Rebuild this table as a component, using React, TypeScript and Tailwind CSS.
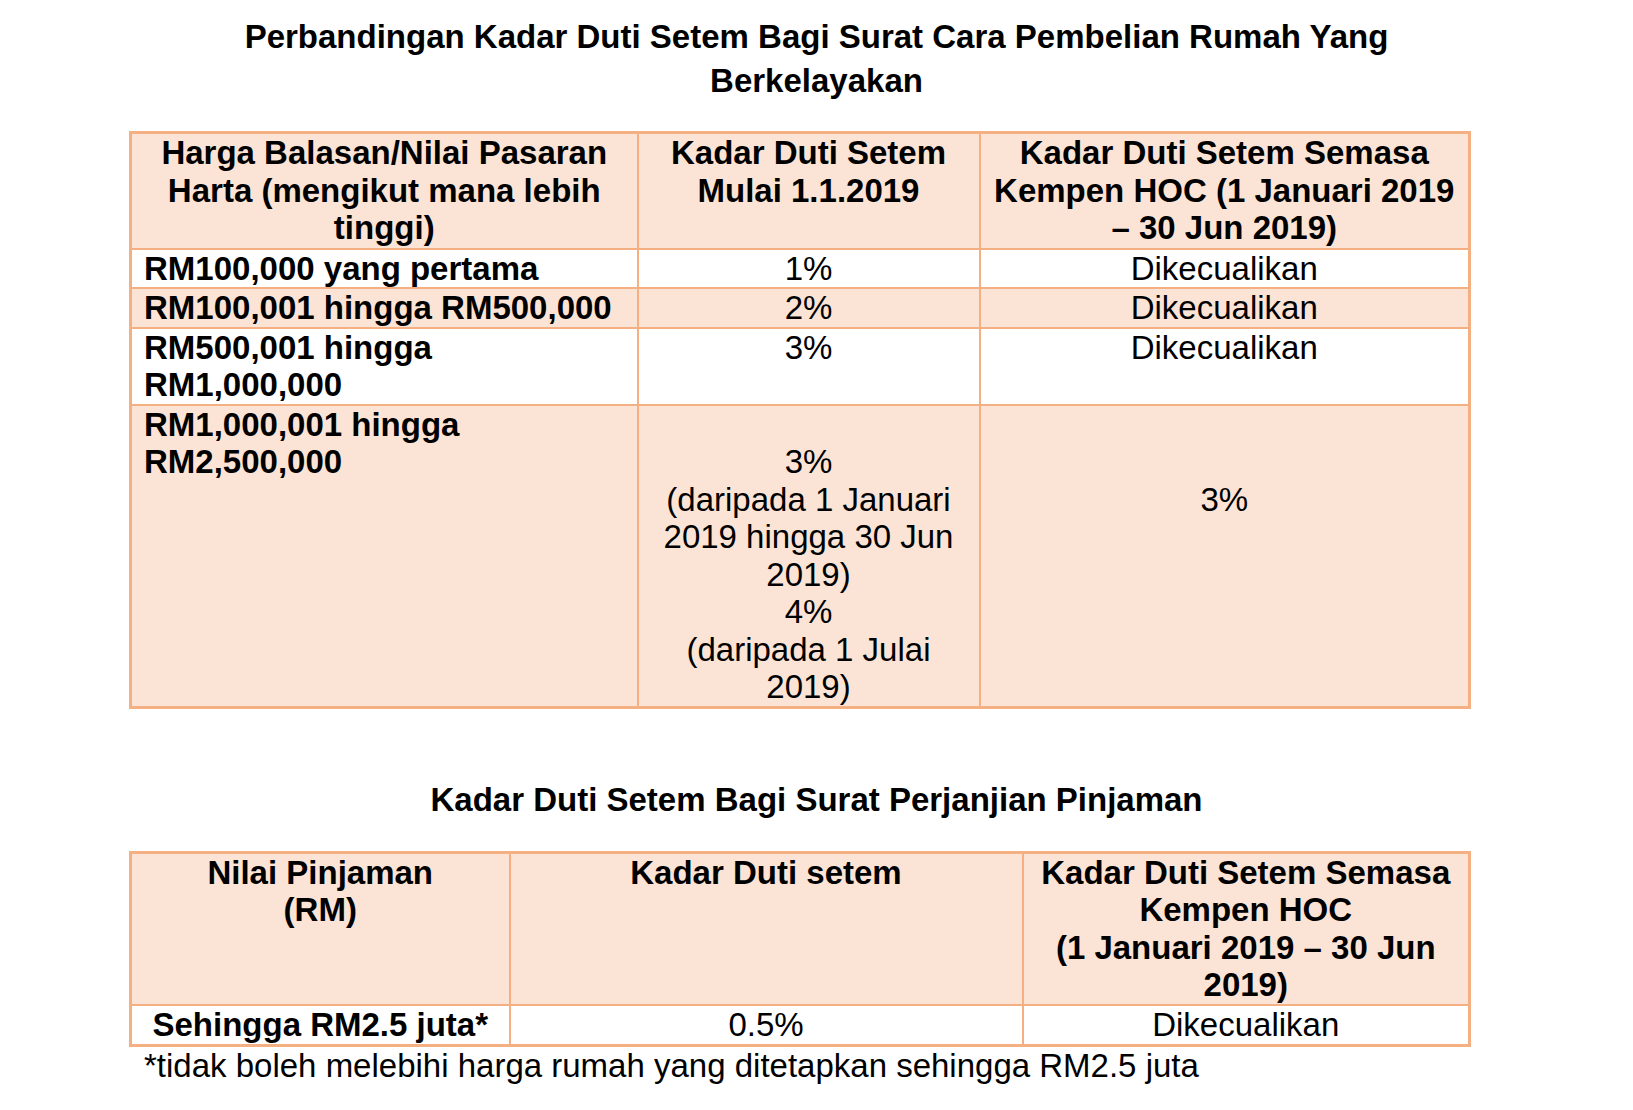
const cellBase = "border-2 border-[#F4B083] align-top p-0";

function TitleBlock({ children }: { children: React.ReactNode }) {
  return (
    <h2 className="text-center font-bold text-[33px] leading-[44px] text-black">
      {children}
    </h2>
  );
}

export default function App() {
  return (
    <div
      className="w-[1633px] h-[1110px] bg-white text-black overflow-hidden"
      style={{ fontFamily: '"Liberation Sans", Arial, sans-serif' }}
    >
      <div className="pt-[15px]">
        <TitleBlock>
          Perbandingan Kadar Duti Setem Bagi Surat Cara Pembelian Rumah Yang
          <br />
          Berkelayakan
        </TitleBlock>
      </div>

      {/* Table 1: house purchase */}
      <div className="pl-[129px] mt-[28px]">
        <table className="w-[1339px] border-collapse border-[3px] border-[#F4B083] text-[33px] leading-[37.5px] table-fixed">
          <colgroup>
            <col className="w-[507px]" />
            <col className="w-[342px]" />
            <col className="w-[490px]" />
          </colgroup>
          <thead>
            <tr className="bg-[#FBE4D5] font-bold">
              <th className={`${cellBase} text-center font-bold h-[116px]`}>
                Harga Balasan/Nilai Pasaran
                <br />
                Harta (mengikut mana lebih
                <br />
                tinggi)
              </th>
              <th className={`${cellBase} text-center font-bold`}>
                Kadar Duti Setem
                <br />
                Mulai 1.1.2019
              </th>
              <th className={`${cellBase} text-center font-bold`}>
                Kadar Duti Setem Semasa
                <br />
                Kempen HOC (1 Januari 2019
                <br />– 30 Jun 2019)
              </th>
            </tr>
          </thead>
          <tbody>
            <tr>
              <td className={`${cellBase} font-bold pl-[12px]`}>RM100,000 yang pertama</td>
              <td className={`${cellBase} text-center`}>1%</td>
              <td className={`${cellBase} text-center`}>Dikecualikan</td>
            </tr>
            <tr className="bg-[#FBE4D5]">
              <td className={`${cellBase} font-bold pl-[12px]`}>RM100,001 hingga RM500,000</td>
              <td className={`${cellBase} text-center`}>2%</td>
              <td className={`${cellBase} text-center`}>Dikecualikan</td>
            </tr>
            <tr>
              <td className={`${cellBase} font-bold pl-[12px]`}>
                RM500,001 hingga
                <br />
                RM1,000,000
              </td>
              <td className={`${cellBase} text-center`}>3%</td>
              <td className={`${cellBase} text-center`}>Dikecualikan</td>
            </tr>
            <tr className="bg-[#FBE4D5]">
              <td className={`${cellBase} font-bold pl-[12px]`}>
                RM1,000,001 hingga
                <br />
                RM2,500,000
              </td>
              <td className={`${cellBase} text-center pt-[37.5px]`}>
                3%
                <br />
                (daripada 1 Januari
                <br />
                2019 hingga 30 Jun
                <br />
                2019)
                <br />
                4%
                <br />
                (daripada 1 Julai
                <br />
                2019)
              </td>
              <td className={`${cellBase} text-center pt-[75px]`}>3%</td>
            </tr>
          </tbody>
        </table>
      </div>

      <div className="mt-[69px]">
        <TitleBlock>Kadar Duti Setem Bagi Surat Perjanjian Pinjaman</TitleBlock>
      </div>

      {/* Table 2: loan agreement */}
      <div className="pl-[129px] mt-[29px]">
        <table className="w-[1339px] border-collapse border-[3px] border-[#F4B083] text-[33px] leading-[37.5px] table-fixed">
          <colgroup>
            <col className="w-[379px]" />
            <col className="w-[513px]" />
            <col className="w-[447px]" />
          </colgroup>
          <thead>
            <tr className="bg-[#FBE4D5]">
              <th className={`${cellBase} text-center font-bold h-[153px]`}>
                Nilai Pinjaman
                <br />
                (RM)
              </th>
              <th className={`${cellBase} text-center font-bold`}>Kadar Duti setem</th>
              <th className={`${cellBase} text-center font-bold`}>
                Kadar Duti Setem Semasa
                <br />
                Kempen HOC
                <br />
                (1 Januari 2019 – 30 Jun
                <br />
                2019)
              </th>
            </tr>
          </thead>
          <tbody>
            <tr>
              <td className={`${cellBase} text-center font-bold`}>Sehingga RM2.5 juta*</td>
              <td className={`${cellBase} text-center`}>0.5%</td>
              <td className={`${cellBase} text-center`}>Dikecualikan</td>
            </tr>
          </tbody>
        </table>
        <p className="text-[33px] leading-[38px] pl-[15px]">
          *tidak boleh melebihi harga rumah yang ditetapkan sehingga RM2.5 juta
        </p>
      </div>
    </div>
  );
}
